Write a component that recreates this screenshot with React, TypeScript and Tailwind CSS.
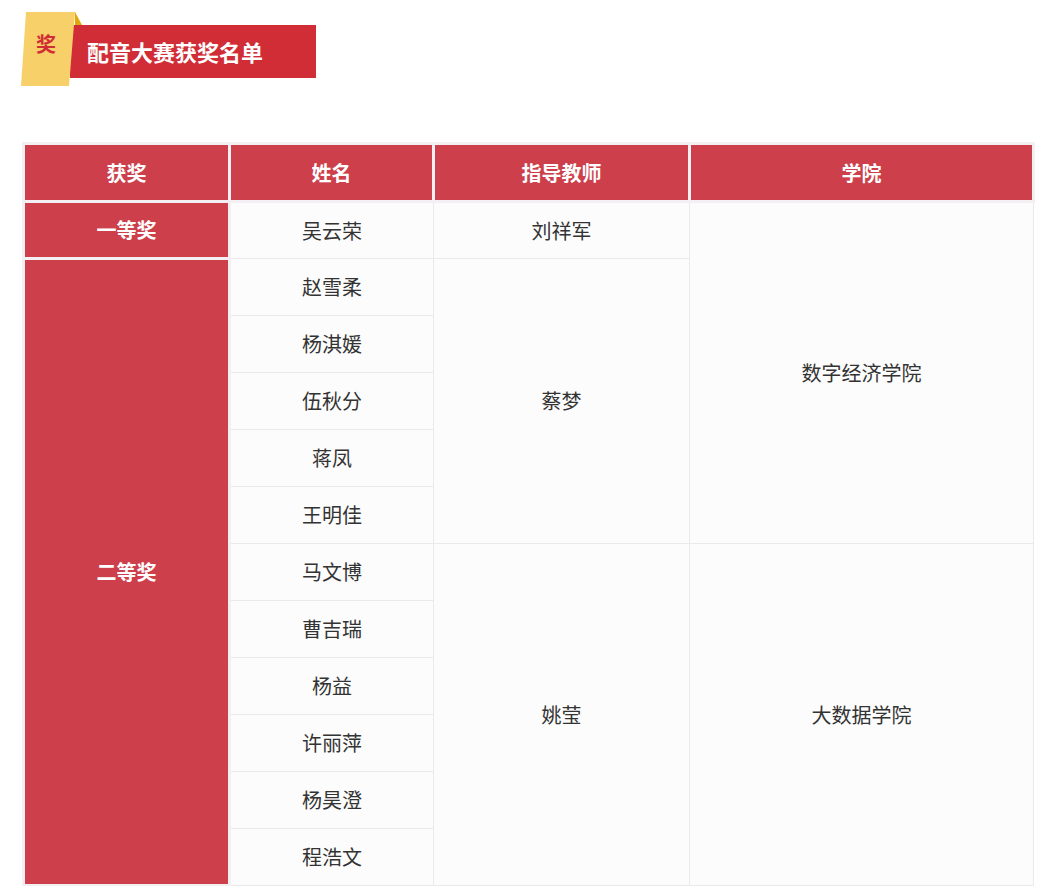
export default function App() {
  const font = { fontFamily: '"Noto Sans CJK SC", "Noto Sans", sans-serif' };
  const red = "bg-[#cc3f4b] text-white font-bold text-[20px] border-[3px] border-[#f3eff3]";
  const w = "bg-[#fcfcfc] text-[#333] text-[20px] border border-[#ece8ec]";
  const names = ["吴云荣","赵雪柔","杨淇媛","伍秋分","蒋凤","王明佳","马文博","曹吉瑞","杨益","许丽萍","杨昊澄","程浩文"];
  return (
    <div className="w-[1055px] h-[886px] bg-white overflow-hidden relative" style={font}>
      <div className="relative h-[142px]">
        <div className="absolute left-[70px] top-[25px] w-[246px] h-[53px] bg-[#d12d36] flex items-center pl-[17px] text-white font-bold text-[22px]">配音大赛获奖名单</div>
        <svg className="absolute left-[21px] top-[11px]" width="62" height="76" viewBox="0 0 62 76">
          <polygon points="54,1 61,14 54,14" fill="#e0a80a" />
          <polygon points="5,1 54,1 48,75 0,75" fill="#f8d06a" />
        </svg>
        <div className="absolute left-[36px] top-[34px] text-[#d12d36] font-bold text-[20px] leading-none">奖</div>
      </div>
      <table className="ml-[22px] w-[1013px] border-collapse table-fixed text-center">
        <colgroup>
          <col className="w-[206px]" /><col className="w-[204px]" /><col className="w-[256px]" /><col />
        </colgroup>
        <thead>
          <tr className="h-[58px]">
            {["获奖","姓名","指导教师","学院"].map(t => <th key={t} className={red}>{t}</th>)}
          </tr>
        </thead>
        <tbody>
          {names.map((n, i) => (
            <tr key={n} className="h-[57px]">
              {i === 0 && <td className={red}>一等奖</td>}
              {i === 1 && <td rowSpan={11} className={red}>二等奖</td>}
              <td className={w}>{n}</td>
              {i === 0 && <td className={w}>刘祥军</td>}
              {i === 1 && <td rowSpan={5} className={w}>蔡梦</td>}
              {i === 6 && <td rowSpan={6} className={w}>姚莹</td>}
              {i === 0 && <td rowSpan={6} className={w}>数字经济学院</td>}
              {i === 6 && <td rowSpan={6} className={w}>大数据学院</td>}
            </tr>
          ))}
        </tbody>
      </table>
    </div>
  );
}
